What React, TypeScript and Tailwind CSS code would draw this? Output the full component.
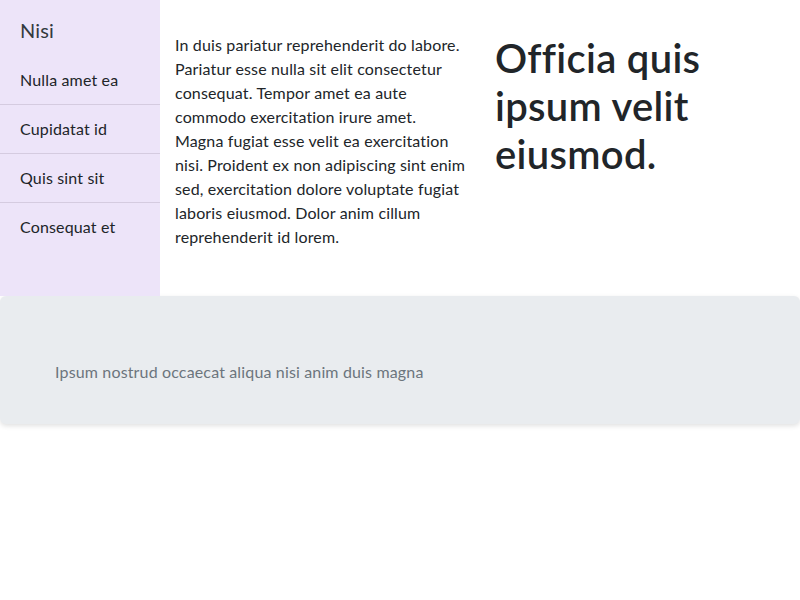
export default function App() {
  const items = ["Nulla amet ea", "Cupidatat id", "Quis sint sit", "Consequat et"];
  return (
    <div className="w-[800px] h-[600px] bg-white text-[#212529] font-['Lato',sans-serif] tracking-[0.15px]">
      <div className="flex h-[296px]">
        <aside className="w-[160px] shrink-0 bg-[#ede4f9]">
          <div className="h-[56px] pt-[15px] px-5 text-[20px] leading-[30px] text-[#343a40]">Nisi</div>
          <ul>
            {items.map((item, i) => (
              <li
                key={item}
                className={`px-5 py-3 text-base leading-6 ${i < items.length - 1 ? "border-b border-[#d5cbe0]" : ""}`}
              >
                {item}
              </li>
            ))}
          </ul>
        </aside>
        <main className="flex-1 grid grid-cols-2">
          <div className="pl-[15px] pt-[33px]">
            <p className="w-[293px] text-base leading-6">
              In duis pariatur reprehenderit do labore. Pariatur esse nulla sit elit consectetur consequat. Tempor
              amet ea aute commodo exercitation irure amet. Magna fugiat esse velit ea exercitation nisi. Proident ex
              non adipiscing sint enim sed, exercitation dolore voluptate fugiat laboris eiusmod. Dolor anim cillum
              reprehenderit id lorem.
            </p>
          </div>
          <div className="px-[15px] pt-[34px]">
            <h1 className="text-[40px] leading-[48px] font-semibold tracking-[0.3px]">
              Officia quis ipsum velit eiusmod.
            </h1>
          </div>
        </main>
      </div>
      <footer className="h-[128px] bg-[#e9ecef] rounded-md shadow-[0_2px_5px_rgba(0,0,0,0.12)] pl-[55px] pt-16">
        <p className="text-base leading-6 text-[#6c757d]">Ipsum nostrud occaecat aliqua nisi anim duis magna</p>
      </footer>
    </div>
  );
}
